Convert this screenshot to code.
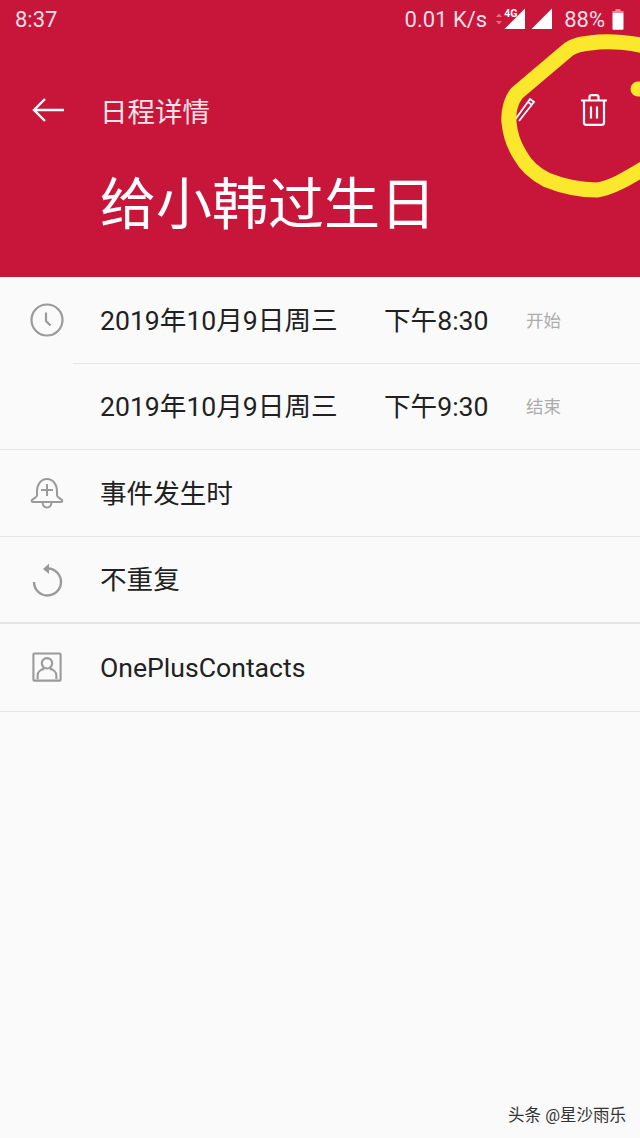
<script lang="ts">
	const rows = [
		{ date: '2019年10月9日周三', time: '下午8:30', tag: '开始' },
		{ date: '2019年10月9日周三', time: '下午9:30', tag: '结束' }
	];
</script>

<div class="page">
	<header class="head">
		<div class="status">
			<span class="clock">8:37</span>
			<div class="status-right">
				<span class="speed">0.01 K/s</span>
				<svg class="arrows" width="8" height="12" viewBox="0 0 8 12">
					<path d="M4 0.5 7 4H1zM4 11.5 1 8h6z" fill="#ea6d84" />
				</svg>
				<span class="sig4g">
					<span class="lte">4G</span>
					<svg width="22" height="22" viewBox="0 0 22 22"><path d="M21 0.5V21H0.5z" fill="#fff" /></svg>
				</span>
				<svg class="sig2" width="22" height="22" viewBox="0 0 22 22"><path d="M21 0.5V21H0.5z" fill="#fff" /></svg>
				<span class="pct">88%</span>
				<svg width="12" height="21" viewBox="0 0 12 21">
					<path d="M3.5 0h5v2h-5z" fill="#ea8a9c" />
					<path d="M0.5 2h11v2H0.5z" fill="#ea8a9c" />
					<path d="M0.5 4h11v16a.8.8 0 0 1-.8.8H1.300a.8.8 0 0 1-.8-.8z" fill="#fff" />
				</svg>
			</div>
		</div>
		<div class="bar">
			<svg class="back" width="34" height="26" viewBox="0 0 34 26" fill="none" stroke="#fff" stroke-width="2.4">
				<path d="M33 13H3M14 2 3 13l11 11" />
			</svg>
			<span class="bar-title">日程详情</span>
			<svg class="edit" width="30" height="30" viewBox="0 0 30 30" fill="none" stroke="#fff" stroke-width="1.800">
				<path d="M6 29 24 4l4 3-15 19M22 7l4 3" />
			</svg>
			<svg class="trash" width="28" height="32" viewBox="0 0 28 32" fill="none" stroke="#fff" stroke-width="2.2">
				<path d="M1 6.500h26M9.500 6V3.200C9.500 2 10.400 1.200 11.500 1.200h5c1.100 0 2 .8 2 2V6M4 7v21.500C4 29.800 5 30.800 6.200 30.800h15.600c1.200 0 2.200-1 2.200-2.300V7M11 12.500v12M17 12.500v12" />
			</svg>
		</div>
		<h1 class="title">给小韩过生日</h1>
	</header>

	<section class="group">
		<div class="row row-inset">
			<div class="ico">
				<svg width="34" height="34" viewBox="0 0 34 34" fill="none" stroke="#9a9a9a" stroke-width="2.200">
					<circle cx="17" cy="17" r="15.500" />
					<path d="M16 9.500v8.500l4.500 4.500" />
				</svg>
			</div>
			<div class="when">
				<span class="date">{rows[0].date}</span>
				<span class="time">{rows[0].time}</span>
				<span class="tag">{rows[0].tag}</span>
			</div>
		</div>
		<div class="row">
			<div class="ico"></div>
			<div class="when">
				<span class="date">{rows[1].date}</span>
				<span class="time">{rows[1].time}</span>
				<span class="tag">{rows[1].tag}</span>
			</div>
		</div>
		<div class="row row-bell">
			<div class="ico">
				<svg width="34" height="34" viewBox="0 0 34 34" fill="none" stroke="#9a9a9a" stroke-width="2">
					<path d="M7 15c0-6.500 4-12 10-12s10 5.500 10 12v4.500c0 1.500 3.500 3 5 4.500.7 1 .2 2-1 2H3c-1.200 0-1.700-1-1-2 1.500-1.500 5-3 5-4.500z" />
					<path d="M12.500 26.500c.3 3 2.200 5 4.500 5s4.200-2 4.500-5M17 8v12M11 14h12" />
				</svg>
			</div>
			<span class="label">事件发生时</span>
		</div>
		<div class="row row-thick">
			<div class="ico">
				<svg width="34" height="34" viewBox="0 0 34 34" fill="none" stroke="#9a9a9a" stroke-width="2.400">
					<path d="M18 5.500A13.500 13.500 0 1 1 4 19" />
					<path d="M13 6 19 .5V11z" fill="#9a9a9a" stroke="none" />
				</svg>
			</div>
			<span class="label">不重复</span>
		</div>
		<div class="row row-last">
			<div class="ico">
				<svg width="30" height="30" viewBox="0 0 32 32" fill="none" stroke="#9a9a9a" stroke-width="2.200">
					<rect x="1.500" y="1.500" width="29" height="29" rx="1" />
					<circle cx="16" cy="12" r="5.500" />
					<path d="M6 29v-4c0-4 3.500-6.500 7-7M26 29v-4c0-4-3.500-6.500-7-7" />
				</svg>
			</div>
			<span class="label">OnePlusContacts</span>
		</div>
	</section>

	<span class="mark">头条 @星沙雨乐</span>

	<svg class="scribble" width="640" height="210" viewBox="0 0 640 210" fill="none" stroke="#fbe82c" stroke-width="15" stroke-linecap="round" stroke-linejoin="round">
		<path d="M648 47C635 43 610 40 590 43 580 44 575 45 569 49L517 93C511 100 508 112 509 122 510 135 515 147 520 155 526 166 535 174 547 180 562 186 580 190 597 190 612 188 628 178 648 166" />
		<path d="M638 89h10" />
	</svg>
</div>

<style>
	:global(body) {
		margin: 0;
	}

	.page {
		position: relative;
		width: 640px;
		height: 1138px;
		overflow: hidden;
		background: #fafafa;
		font-family: Roboto, 'Noto Sans CJK SC', sans-serif;
	}

	.head {
		height: 277px;
		box-sizing: border-box;
		background: #c8163a;
		color: #fff;
	}

	.status {
		display: flex;
		align-items: center;
		justify-content: space-between;
		height: 38px;
		padding: 0 16px 0 15px;
		font-size: 22px;
		color: #f9dfe4;
	}

	.status-right {
		display: flex;
		align-items: center;
	}

	.speed {
		margin-right: 8px;
	}

	.arrows {
		margin-right: 1px;
	}

	.sig4g {
		position: relative;
		display: flex;
		margin-right: 5px;
	}

	.lte {
		position: absolute;
		left: 0;
		top: -1px;
		font-size: 10.500px;
		line-height: 13px;
		font-weight: 700;
		color: #fff;
	}

	.sig2 {
		margin-right: 11px;
	}

	.pct {
		margin-right: 7px;
	}

	.bar {
		display: flex;
		align-items: center;
		height: 68px;
		margin-top: 38px;
		padding: 0 32px 0 31px;
	}

	.bar-title {
		margin-left: 35px;
		font-size: 27.500px;
		color: #f9e4e8;
	}

	.edit {
		margin-left: auto;
		margin-right: 44px;
	}

	.title {
		margin: 26px 0 0 100px;
		font-size: 56px;
		font-weight: 400;
		line-height: 70px;
	}

	.row {
		display: flex;
		align-items: center;
		box-sizing: border-box;
		height: 87px;
		border-bottom: 1px solid #e6e6e6;
		color: #212121;
		font-size: 26.600px;
	}

	.row-inset {
		position: relative;
		border-bottom: none;
	}

	.row-inset::after {
		content: '';
		position: absolute;
		left: 73px;
		right: 0;
		bottom: 0;
		height: 1px;
		background: #e6e6e6;
	}

	.row-inset .ico {
		margin-bottom: 2px;
	}

	.row-inset + .row {
		height: 86px;
	}

	.row-thick {
		border-bottom: 2px solid #e4e4e4;
	}

	.row-last {
		height: 88px;
	}

	.row-last .ico {
		margin-bottom: 2px;
	}

	.row-last .label {
		margin-bottom: 0;
	}

	.ico {
		display: flex;
		justify-content: center;
		flex: none;
		width: 93px;
		margin-right: 7px;
	}

	.when,
	.label {
		margin-bottom: 4px;
	}

	.when {
		display: flex;
		align-items: center;
	}

	.date {
		width: 284px;
	}

	.time {
		width: 142px;
	}

	.tag {
		margin-top: 2px;
		font-size: 17.500px;
		color: #adadad;
	}

	.mark {
		position: absolute;
		right: 14px;
		bottom: 12px;
		font-size: 16.500px;
		color: #333;
	}

	.scribble {
		position: absolute;
		left: 0;
		top: 0;
	}
</style>
